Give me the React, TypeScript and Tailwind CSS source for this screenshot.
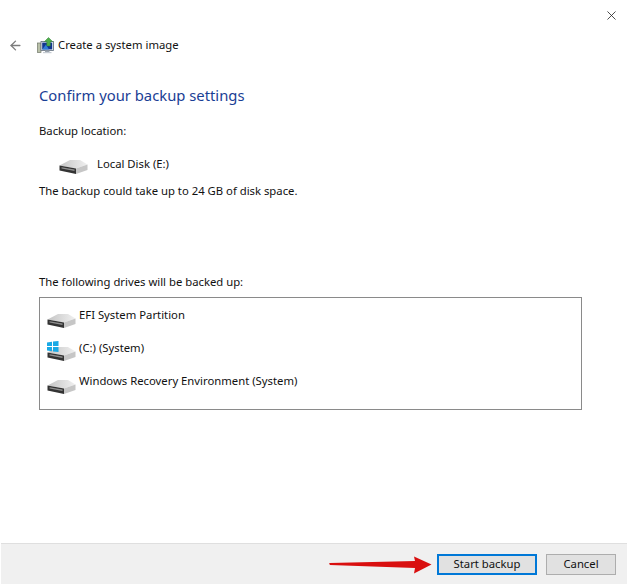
import { ArrowLeft, X } from 'lucide-react'

function DriveIcon({ windows = false }: { windows?: boolean }) {
  return (
    <svg width="29" height="21" viewBox="0 0 29 21" className="shrink-0">
      <defs>
        <linearGradient id="driveTop" x1="0" x2="1" y1="0" y2="0">
          <stop offset="0" stopColor="#c4c4c4" />
          <stop offset="1" stopColor="#f0f0f0" />
        </linearGradient>
      </defs>
      <path d="M0.5 11.5 L11 6 H21 L28.5 10.5 L17 14.5 Z" fill="url(#driveTop)" />
      <path d="M0.5 11.5 L17 14.5 V20 L0.5 16.5 Z" fill="#333" />
      <path d="M2.5 13.2 L15.5 15.6 V17 L2.5 14.6 Z" fill="#8f8f8f" />
      <path d="M17 14.5 L28.5 10.5 V16 L17 20 Z" fill="#c6c6c6" />
      {windows && (
        <g fill="#19a9e5">
          <path d="M0 1.4 L5 0.7 V5 H0 Z" />
          <path d="M6 0.5 L11.5 0 V5 H6 Z" />
          <path d="M0 6 H5 V10.2 L0 9.5 Z" />
          <path d="M6 6 H11.5 V11 L6 10.4 Z" />
        </g>
      )}
    </svg>
  )
}

function BackupIcon() {
  return (
    <svg width="17" height="17" viewBox="0 0 17 17" className="shrink-0">
      <rect x="0.5" y="6" width="3.5" height="9.5" fill="#b9c0a8" stroke="#6f7768" strokeWidth="0.7" />
      <rect x="4" y="4.5" width="12.5" height="9" fill="#e8eef4" stroke="#5f6b7a" strokeWidth="0.8" />
      <rect x="5.2" y="5.6" width="10" height="6.8" fill="#12358f" />
      <path d="M5.2 12.4 L9 7.5 L12 12.4 Z" fill="#2f7bd8" />
      <rect x="8" y="13.5" width="4.5" height="1.5" fill="#9aa3ad" />
      <rect x="6" y="15" width="8.5" height="1.2" fill="#c5cbd2" />
      <path d="M11.5 0.5 L15.5 4.5 H13.3 V9 H9.8 V4.5 H7.5 Z" fill="#4fae4a" stroke="#2d7f35" strokeWidth="0.5" />
    </svg>
  )
}

const drives = [
  { name: 'EFI System Partition', windows: false },
  { name: '(C:) (System)', windows: true },
  { name: 'Windows Recovery Environment (System)', windows: false },
]

export default function App() {
  return (
    <div className="w-[627px] h-[584px] bg-white flex flex-col text-[11.3px] text-[#111] font-['Noto_Sans',sans-serif] overflow-hidden">
      <div className="flex justify-end pt-[8px] pr-[8px]">
        <X size={15} strokeWidth={1.3} className="text-[#222]" />
      </div>

      <div className="flex items-center mt-[13px] pl-[8px] h-[18px]">
        <ArrowLeft size={15} strokeWidth={2.2} className="text-[#7c7c7c]" />
        <div className="ml-[14px]">
          <BackupIcon />
        </div>
        <span className="ml-[4px]">Create a system image</span>
      </div>

      <div className="flex-1 pl-[39px] pr-[45px]">
        <h1 className="mt-[30px] text-[14.8px] leading-[22px] text-[#1a3e95] font-normal">Confirm your backup settings</h1>
        <p className="mt-[17px] leading-[16px]">Backup location:</p>
        <div className="flex items-center mt-[14px] pl-[20px] h-[22px]">
          <DriveIcon />
          <span className="ml-[9px]">Local Disk (E:)</span>
        </div>
        <p className="mt-[8px] leading-[16px]">The backup could take up to 24 GB of disk space.</p>
        <p className="mt-[75px] leading-[16px]">The following drives will be backed up:</p>
        <div className="mt-[7px] h-[113px] border border-[#8a8a8a] pl-[7px] pt-[2px]">
          {drives.map((drive) => (
            <div key={drive.name} className="flex h-[33px] items-start">
              <div className="mt-[8px]">
                <DriveIcon windows={drive.windows} />
              </div>
              <span className="ml-[3px] mt-[7px] leading-[16px]">{drive.name}</span>
            </div>
          ))}
        </div>
      </div>

      <div className="h-[41px] ml-px bg-[#f0f0f0] border-t border-[#dfdfdf] flex items-center justify-end pr-[11px]">
        <svg width="103" height="18" viewBox="0 0 103 18" className="mr-[5px] mt-[1px]">
          <path d="M0 7.5 L1 7 L86 5 L85 0.5 L102.5 8.5 L85 17.5 L86 12 L1 9 Z" fill="#d90f0f" />
        </svg>
        <button className="w-[100px] h-[21px] bg-[#e1e1e1] border-2 border-[#0078d7] text-[#111]">Start backup</button>
        <button className="ml-[9px] w-[70px] h-[21px] bg-[#e1e1e1] border border-[#adadad] text-[#111]">Cancel</button>
      </div>
    </div>
  )
}
